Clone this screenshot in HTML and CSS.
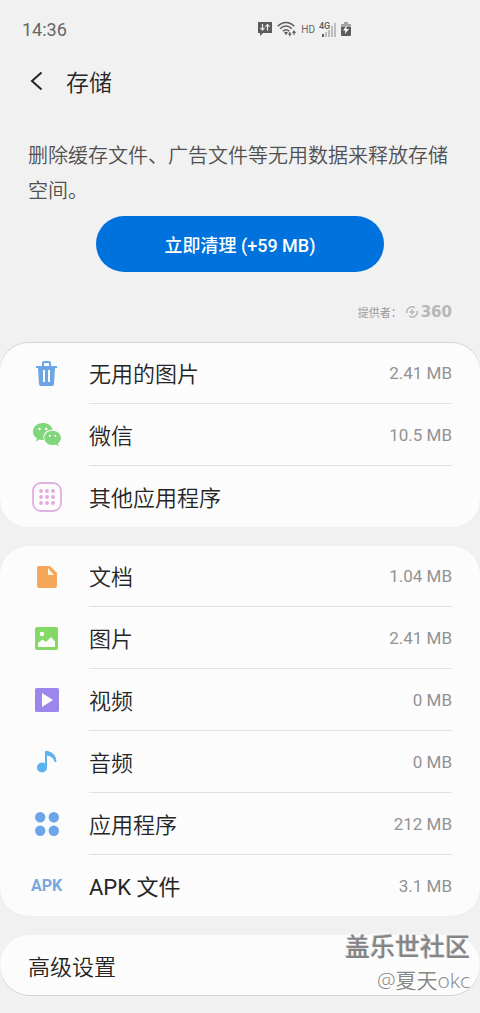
FILE: index.html
```html
<!DOCTYPE html>
<html lang="zh-CN">
<head>
<meta charset="utf-8">
<meta name="viewport" content="width=device-width, initial-scale=1">
<title>存储</title>
<link rel="stylesheet" href="styles.css">
</head>
<body>
<div class="screen">
  <div class="status">
    <time class="clock">14:36</time>
    <div class="status-icons">
      <svg width="14" height="14" viewBox="0 0 14 14"><path fill="#5c5c5c" d="M0 0h14v11H5l-3 3v-3H0z"/><path fill="none" stroke="#f1f1f1" stroke-width="1.2" d="M4.500 2v6M2.500 6l2 2 2-2M9.500 8.500V3M7.500 4.700l2-2 2 2"/></svg>
      <svg class="wifi" width="20" height="16" viewBox="0 0 20 16"><g fill="none" stroke="#5c5c5c" stroke-width="1.500"><path d="M.8 5.200C5.500.2 12.500.2 17.200 5.200M3.200 7.700c3.400-3.500 8.200-3.500 11.600 0M5.800 10.200c1.900-1.900 4.500-1.900 6.400 0"/></g><path fill="#5c5c5c" d="M7 11.500q2-1.500 4 0L9 14zM11 12.500h1.200V11h1.200v1.500h1.300l-1.900 3zM15 12l2-3 2 3h-1.400v2h-1.200v-2z"/></svg>
      <span class="hd">HD</span>
      <svg class="signal" width="17" height="15" viewBox="0 0 17 15"><path fill="#5c5c5c" d="M3 12h2v3H3z"/><path fill="#bcbcbc" d="M6 10h2v5H6zM9 8h2v7H9zM12 4h2v11h-2zM15 1h2v14h-2z"/><text class="net" x="0" y="7">4G</text></svg>
      <svg width="10" height="14" viewBox="0 0 10 14"><path fill="#a5a5a5" d="M3 0h4v2h3v4H0V2h3z"/><path fill="#5c5c5c" d="M0 5h10v8q0 1-1 1H1q-1 0-1-1z"/><path fill="#fff" d="M5.800 3.500 2 8.500h2.500L3.800 12 8 7H5.400z"/></svg>
    </div>
  </div>

  <header class="header">
    <button class="back" type="button" aria-label="返回"><svg width="14" height="20" viewBox="0 0 14 20"><path d="M11.500 1.500 2 10l9.500 8.500" fill="none" stroke="#252525" stroke-width="2"/></svg></button>
    <h1 class="title">存储</h1>
  </header>

  <section class="intro">
    <p class="desc">删除缓存文件、广告文件等无用数据来释放存储空间。</p>
    <button class="clean" type="button">立即清理 (+59 MB)</button>
    <div class="provider">
      <span>提供者：</span>
      <svg width="12" height="12" viewBox="0 0 12 12"><g fill="none" stroke="#b7b7b7" stroke-width="1.500"><path d="M1 7A5 5 0 0 1 9 2M11 5A5 5 0 0 1 3 10"/></g><path fill="#b7b7b7" d="M5.200 3.300h1.600v1.900h1.900v1.600H6.800v1.900H5.200V6.800H3.300V5.200h1.900z"/></svg>
      <span class="brand">360</span>
    </div>
  </section>

  <main class="cards">
    <ul class="card card-lined">
      <li class="row"><span class="icon"><svg width="21" height="25" viewBox="0 0 21 25"><path fill="#6ca5e5" d="M6 5V2q0-2 2-2h5q2 0 2 2v3h6v2h-2l-1 16q0 2-2 2H5q-2 0-2-2L2 7H0V5zm2 0h5V2H8z"/><path fill="#fcfcfc" d="M7 9h2v12H7zM12 9h2v12h-2z"/></svg></span>
        <div class="line"><span class="label">无用的图片</span><span class="value">2.41 MB</span></div></li>
      <li class="row"><span class="icon"><svg width="28" height="24" viewBox="0 0 28 24"><path fill="#7fd67b" d="M10 0C4 0 0 3.700 0 8.700c0 2.700 1.400 5 3.900 6.600L3 18.500l3.500-1.900q2.200.6 4.400.5C9 10.500 14 6.400 19.800 6.800 18.500 2.700 14.700 0 10 0z"/><path fill="#7fd67b" d="M19.500 7.800C14.800 7.800 11.300 11 11.300 15s3.600 7 8.200 7q1.700 0 3.200-.6l3 1.800-.8-2.700c1.800-1.300 3-3.200 3-5.500 0-4-3.600-7.200-8.400-7.200z"/><g fill="#fcfcfc"><circle cx="6.500" cy="6" r="1.300"/><circle cx="13.200" cy="6" r="1.300"/><circle cx="16.800" cy="12.800" r="1.100"/><circle cx="22.300" cy="12.800" r="1.100"/></g></svg></span>
        <div class="line"><span class="label">微信</span><span class="value">10.5 MB</span></div></li>
      <li class="row"><span class="icon"><svg width="30" height="30" viewBox="0 0 30 30"><rect x="1" y="1" width="28" height="28" rx="8" fill="none" stroke="#e3b1e1" stroke-width="1.900"/><g fill="#e3a8e1"><circle cx="9" cy="9" r="1.900"/><circle cx="15" cy="9" r="1.900"/><circle cx="21" cy="9" r="1.900"/><circle cx="9" cy="15" r="1.900"/><circle cx="15" cy="15" r="1.900"/><circle cx="21" cy="15" r="1.900"/><circle cx="9" cy="21" r="1.900"/><circle cx="15" cy="21" r="1.900"/><circle cx="21" cy="21" r="1.900"/></g></svg></span>
        <div class="line"><span class="label">其他应用程序</span></div></li>
    </ul>

    <ul class="card">
      <li class="row"><span class="icon"><svg width="20" height="22" viewBox="0 0 20 22"><path fill="#f6a659" d="M2 0h11l7 7v13q0 2-2 2H2q-2 0-2-2V2q0-2 2-2z"/><path fill="#fff4df" d="M11 2v7h6z"/></svg></span>
        <div class="line"><span class="label">文档</span><span class="value">1.04 MB</span></div></li>
      <li class="row"><span class="icon"><svg width="23" height="23" viewBox="0 0 23 23"><rect width="23" height="23" rx="2" fill="#84d966"/><circle cx="7" cy="7" r="2.300" fill="#fcfcfc"/><path fill="#fcfcfc" d="M3 20v-4l4.500-3.500L11 15l5-5 4 4.500V20z"/></svg></span>
        <div class="line"><span class="label">图片</span><span class="value">2.41 MB</span></div></li>
      <li class="row"><span class="icon"><svg width="24" height="24" viewBox="0 0 24 24"><rect width="24" height="24" rx="1.500" fill="#9c86eb"/><path fill="#fcfcfc" d="M7 5v14l11-7z"/></svg></span>
        <div class="line"><span class="label">视频</span><span class="value">0 MB</span></div></li>
      <li class="row"><span class="icon"><svg width="20" height="22" viewBox="0 0 20 22"><circle cx="5" cy="16.500" r="5" fill="#5cb3ec"/><path fill="#5cb3ec" d="M8 0h3q8 2 8.500 11h-2Q16.500 5.500 10 4.500v12H8z"/></svg></span>
        <div class="line"><span class="label">音频</span><span class="value">0 MB</span></div></li>
      <li class="row"><span class="icon"><svg width="24" height="24" viewBox="0 0 24 24"><g fill="#6ca5ea"><circle cx="5.200" cy="5.200" r="5.200"/><circle cx="18.800" cy="5.200" r="5.200"/><circle cx="5.200" cy="18.800" r="5.200"/><circle cx="18.800" cy="18.800" r="5.200"/></g></svg></span>
        <div class="line"><span class="label">应用程序</span><span class="value">212 MB</span></div></li>
      <li class="row"><span class="icon apk">APK</span>
        <div class="line"><span class="label label-latin">APK 文件</span><span class="value">3.1 MB</span></div></li>
    </ul>

    <button class="card advanced" type="button">高级设置</button>
  </main>

  <div class="watermark">
    <strong class="community">盖乐世社区</strong>
    <span class="author">@夏天okc</span>
  </div>
</div>
</body>
</html>
```
FILE: styles.css
```css
* {
  box-sizing: border-box;
}

body {
  margin: 0;
  background: #f1f1f1;
  color: #252525;
  font-family: Roboto, "Noto Sans CJK SC", sans-serif;
}

button {
  border: 0;
  padding: 0;
  font: inherit;
  color: inherit;
}

.screen {
  position: relative;
  padding-bottom: 17px;
}

.status {
  display: flex;
  align-items: center;
  justify-content: space-between;
  height: 58px;
  padding: 0 129px 0 22px;
}

.clock {
  font-size: 18px;
  color: #666;
}

.status-icons {
  display: flex;
  align-items: center;
  gap: 5px;
}

.wifi,
.hd {
  margin-right: -1px;
}

.hd {
  font-size: 10px;
  color: #666;
}

.net {
  font-size: 9px;
  font-weight: 500;
  fill: #5c5c5c;
}

.header {
  display: flex;
  align-items: center;
  gap: 22px;
  height: 46px;
  padding: 0 30px;
}

.back {
  display: flex;
  background: none;
}

.title {
  margin: 0;
  font-size: 23px;
  font-weight: 350;
}

.intro {
  display: flex;
  flex-direction: column;
  padding: 35px 28px 0;
}

.desc {
  margin: 0;
  font-size: 20px;
  font-weight: 350;
  line-height: 35px;
  color: #505050;
}

.clean {
  align-self: center;
  width: 68%;
  height: 56px;
  margin-top: 7px;
  border-radius: 28px;
  background: #0072de;
  color: #fff;
  font-size: 18px;
  font-weight: 500;
}

.provider {
  display: flex;
  align-items: center;
  justify-content: flex-end;
  height: 20px;
  margin: 30px 0 21px;
  font-size: 11px;
  color: #999;
}

.brand {
  margin-left: 3px;
  font-family: "DejaVu Sans", sans-serif;
  font-size: 15px;
  font-weight: 700;
  color: #b7b7b7;
}

.provider svg {
  margin-left: 4px;
}

.cards {
  display: flex;
  flex-direction: column;
  gap: 19px;
}

.card {
  width: 100%;
  margin: 0;
  padding: 0;
  list-style: none;
  border-radius: 28px;
  background: #fcfcfc;
  box-shadow: 0 0 1px #ddd;
}

.card-lined {
  box-shadow: 0 -1px 0 #d4d4d4;
}

.row {
  display: flex;
  height: 62px;
  padding-right: 28px;
}

.row:first-child,
.row:last-child {
  height: 61px;
}

.icon {
  display: flex;
  flex: none;
  align-items: center;
  justify-content: center;
  width: 61px;
  margin: 0 12px 0 16px;
}

.apk {
  font-size: 16px;
  font-weight: 700;
  color: #76a8df;
}

.line {
  display: flex;
  flex: 1;
  align-items: center;
  justify-content: space-between;
  border-bottom: 1px solid #e2e2e2;
}

.row:last-child .line {
  border-bottom: 0;
}

.label {
  padding-top: 4px;
  font-size: 22px;
  font-weight: 350;
  line-height: 32px;
}

.label-latin {
  font-weight: 400;
}

.value {
  font-size: 17px;
  color: #929292;
}

.advanced {
  height: 60px;
  padding: 0 28px;
  border-radius: 30px;
  box-shadow: 0 1px 0 #d4d4d4;
  font-size: 22px;
  font-weight: 350;
  text-align: left;
}

.watermark {
  position: absolute;
  right: 10px;
  bottom: 16px;
  display: flex;
  flex-direction: column;
  align-items: flex-end;
  color: #858585;
  text-shadow: -1px -1px 0 #fff;
  pointer-events: none;
}

.community {
  font-size: 25px;
  font-weight: 500;
  line-height: 32px;
  text-shadow: -1px -1px 0 #d0d0d0, -2px -2px 0 #fff;
}

.author {
  font-family: "Open Sans", "Noto Sans CJK SC", sans-serif;
  font-size: 21px;
  font-weight: 350;
  line-height: 32px;
}
```
